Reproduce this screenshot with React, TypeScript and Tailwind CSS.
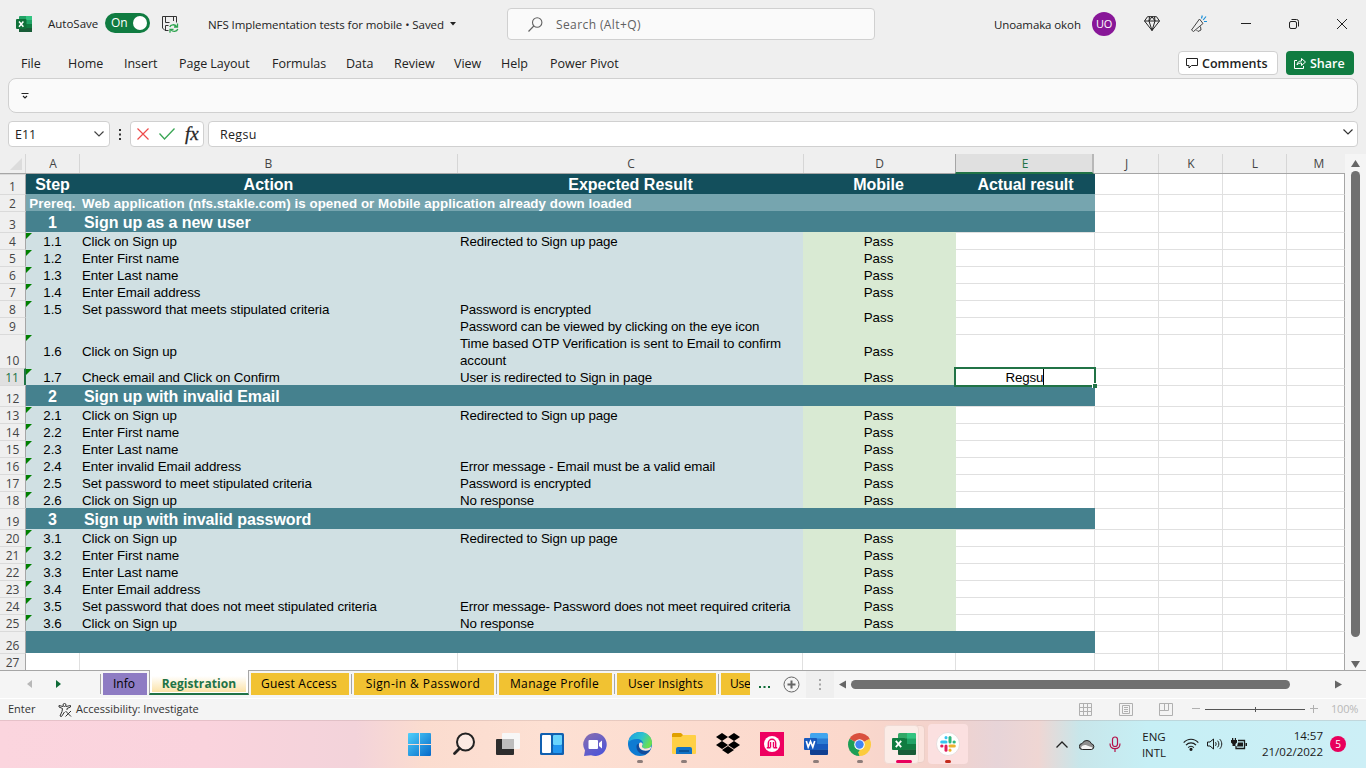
import React from "react";

type RowKind = "head" | "prereq" | "section" | "step" | "closing" | "blank";

interface SheetRow {
  n: number;
  kind: RowKind;
  h: string;
  step?: string;
  action?: string;
  expected?: string;
  mobile?: string;
  actual?: string;
}

const H17 = "h-[17px]";

const rows: SheetRow[] = [
  { n: 1, kind: "head", h: "h-[20px]", step: "Step", action: "Action", expected: "Expected Result", mobile: "Mobile", actual: "Actual result" },
  { n: 2, kind: "prereq", h: H17, step: "Prereq.", action: "Web application (nfs.stakle.com) is opened or Mobile application already down loaded" },
  { n: 3, kind: "section", h: "h-[21px]", step: "1", action: "Sign up as a new user" },
  { n: 4, kind: "step", h: H17, step: "1.1", action: "Click on Sign up", expected: "Redirected to Sign up page", mobile: "Pass" },
  { n: 5, kind: "step", h: H17, step: "1.2", action: "Enter First name", mobile: "Pass" },
  { n: 6, kind: "step", h: H17, step: "1.3", action: "Enter Last name", mobile: "Pass" },
  { n: 7, kind: "step", h: H17, step: "1.4", action: "Enter Email address", mobile: "Pass" },
  { n: 8, kind: "step", h: H17, step: "1.5", action: "Set password that meets stipulated criteria", expected: "Password is encrypted", mobile: "Pass" },
  { n: 9, kind: "step", h: H17, expected: "Password can be viewed by clicking on the eye icon" },
  { n: 10, kind: "step", h: "h-[34px]", step: "1.6", action: "Click on Sign up", expected: "Time based OTP Verification is sent to Email to confirm account", mobile: "Pass" },
  { n: 11, kind: "step", h: H17, step: "1.7", action: "Check email and Click on Confirm", expected: "User is redirected to Sign in page", mobile: "Pass" },
  { n: 12, kind: "section", h: "h-[21px]", step: "2", action: "Sign up with invalid Email" },
  { n: 13, kind: "step", h: H17, step: "2.1", action: "Click on Sign up", expected: "Redirected to Sign up page", mobile: "Pass" },
  { n: 14, kind: "step", h: H17, step: "2.2", action: "Enter First name", mobile: "Pass" },
  { n: 15, kind: "step", h: H17, step: "2.3", action: "Enter Last name", mobile: "Pass" },
  { n: 16, kind: "step", h: H17, step: "2.4", action: "Enter invalid Email address", expected: "Error message - Email must be a valid email", mobile: "Pass" },
  { n: 17, kind: "step", h: H17, step: "2.5", action: "Set password to meet stipulated criteria", expected: "Password is encrypted", mobile: "Pass" },
  { n: 18, kind: "step", h: H17, step: "2.6", action: "Click on Sign up", expected: "No response", mobile: "Pass" },
  { n: 19, kind: "section", h: "h-[21px]", step: "3", action: "Sign up with invalid password" },
  { n: 20, kind: "step", h: H17, step: "3.1", action: "Click on Sign up", expected: "Redirected to Sign up page", mobile: "Pass" },
  { n: 21, kind: "step", h: H17, step: "3.2", action: "Enter First name", mobile: "Pass" },
  { n: 22, kind: "step", h: H17, step: "3.3", action: "Enter Last name", mobile: "Pass" },
  { n: 23, kind: "step", h: H17, step: "3.4", action: "Enter Email address", mobile: "Pass" },
  { n: 24, kind: "step", h: H17, step: "3.5", action: "Set password that does not meet stipulated criteria", expected: "Error message- Password does not meet required criteria", mobile: "Pass" },
  { n: 25, kind: "step", h: H17, step: "3.6", action: "Click on Sign up", expected: "No response", mobile: "Pass" },
  { n: 26, kind: "closing", h: "h-[22px]" },
  { n: 27, kind: "blank", h: H17 },
];

const GRID = "grid grid-rows-[100%] grid-cols-[26px_54px_378px_345px_153px_139px_64px_64px_64px_58px]";

const bandColor: Record<RowKind, string> = {
  head: "bg-[#134f5c]",
  prereq: "bg-[#76a5af]",
  section: "bg-[#45818e]",
  closing: "bg-[#45818e]",
  step: "bg-[#d0e0e3]",
  blank: "bg-white border-r border-[#e0e0e0]",
};

const bandText: Record<RowKind, string> = {
  head: "text-white font-bold text-[16px] leading-[20px]",
  prereq: "text-white font-bold text-[13.33px] leading-[17px] tracking-[0.05px]",
  section: "text-white font-bold text-[16px] leading-[21px] tracking-[-0.07px]",
  closing: "",
  step: "text-black text-[13.33px] leading-[17px]",
  blank: "",
};

function TitleBar() {
  return (
    <header className="flex h-12 shrink-0 items-center text-[12px] text-[#222]">
      <svg className="ml-4 shrink-0" width="16" height="16" viewBox="0 0 16 16">
        <rect x="3" width="13" height="16" rx="1" fill="#21a366" />
        <rect x="10" width="6" height="4" fill="#33c481" />
        <rect x="3" y="4" width="7" height="4" fill="#107c41" />
        <rect x="3" y="8" width="13" height="4" fill="#107c41" />
        <rect x="3" y="12" width="13" height="4" fill="#185c37" />
        <rect y="3" width="10.500" height="10" rx="1" fill="#0f7039" />
        <path d="M3 5.500l4.400 5.200M7.400 5.500L3 10.700" stroke="#fff" strokeWidth="1.500" />
      </svg>
      <span className="ml-4 w-[57px] whitespace-nowrap text-[11.5px]">AutoSave</span>
      <div className="flex h-5 w-[45px] -translate-y-px items-center justify-between rounded-full bg-[#107c41] pl-1.5 pr-[3px] text-white">
        <span>On</span>
        <span className="size-[14px] rounded-full bg-white" />
      </div>
      <svg className="ml-3 shrink-0" width="17" height="17" viewBox="0 0 17 17" fill="none" stroke="#333">
        <path d="M6.500 14.500H3L.5 12V.5h14V6.500M3.500.5V6.500h4M11.500.5V5M3.500 14.500V9.500h3" />
        <path d="M7.800 11c.7-2.600 5-3.200 6.800-.4M15.500 7.500v3.500h-3.500M15.800 13c-.9 2.800-5 3.400-6.900.6M8 16.800v-3.500h3.500" stroke="#2ea44f" strokeWidth="1.300" />
      </svg>
      <span className="ml-[29px] w-[237px] translate-y-px whitespace-nowrap text-[11.5px] tracking-[-0.07px]">NFS Implementation tests for mobile • Saved</span>
      <svg className="ml-[5px]" width="6" height="4" viewBox="0 0 6 4"><path d="M0 0h6L3 3.500z" fill="#222" /></svg>
      <div className="ml-[51px] flex h-8 w-[368px] items-center rounded-[4px] border border-[#d0d0d0] bg-[#fafafa] text-[#616161]">
        <svg className="ml-5" width="15" height="15" viewBox="0 0 15 15" fill="none" stroke="#616161" strokeWidth="1.100">
          <circle cx="9.200" cy="5.500" r="4.700" />
          <path d="M5.800 9L.5 14.500" />
        </svg>
        <span className="ml-[13px] translate-y-px tracking-[0.4px]">Search (Alt+Q)</span>
      </div>
      <span className="ml-[119px] w-[87px] translate-y-px whitespace-nowrap text-[11.5px] tracking-[-0.1px]">Unoamaka okoh</span>
      <span className="ml-[11px] flex size-6 items-center justify-center rounded-full bg-[#881798] text-[11px] tracking-[-0.3px] text-white">UO</span>
      <svg className="ml-7" width="16" height="16" viewBox="0 0 16 16" fill="none" stroke="#222">
        <path d="M3.500.7h9l3 4.300L8 14.500.5 5zM.5 5h15M8 .7L5 5l3 9.500L11 5zM5.500.7L5 5M10.500.7L11 5" />
      </svg>
      <svg className="ml-[30px]" width="18" height="18" viewBox="0 0 18 18" fill="none" stroke="#444">
        <path d="M1.500 15L9.500 4l3.500 4.500L3.500 16.500zM6.500 15l1.500 1.500 3-1.500-.5-3.500" />
        <path d="M11.500 3.500L12.300.5M13.200 5L16 1.500M14 6.500h3" stroke="#1a8fd8" strokeWidth="1.200" />
      </svg>
      <svg className="ml-[33px]" width="10" height="10" viewBox="0 0 10 10"><path d="M0 4.500h10" stroke="#222" /></svg>
      <svg className="ml-[38px]" width="10" height="10" viewBox="0 0 10 10" fill="none" stroke="#222">
        <rect x=".5" y="2.500" width="7" height="7" rx="1.500" />
        <path d="M2.500.5H7.500a2 2 0 0 1 2 2V7.500" />
      </svg>
      <svg className="ml-[38px]" width="10" height="10" viewBox="0 0 10 10"><path d="M0 0l10 10M10 0L0 10" stroke="#222" /></svg>
    </header>
  );
}

function MenuBar() {
  return (
    <nav className="flex h-[30px] shrink-0 items-center text-[12.5px] text-[#222]">
      <div className="grid translate-y-px grid-cols-[47px_56px_55px_93px_74px_48px_60px_47px_49px_80px] whitespace-nowrap pl-[21px] tracking-[-0.03px]">
        <span>File</span>
        <span>Home</span>
        <span>Insert</span>
        <span>Page Layout</span>
        <span>Formulas</span>
        <span>Data</span>
        <span>Review</span>
        <span>View</span>
        <span>Help</span>
        <span>Power Pivot</span>
      </div>
      <button className="ml-auto flex h-6 w-[100px] items-center rounded-[4px] border border-[#d0d0d0] bg-white pl-[7px] text-[12.5px] font-semibold">
        <svg width="12" height="11" viewBox="0 0 12 11" fill="none" stroke="#222"><path d="M.5.500h11v7H5.500L3 10V7.500H.5z" /></svg>
        <span className="ml-[4px] translate-y-px">Comments</span>
      </button>
      <button className="ml-2 mr-3 flex h-6 w-[68px] items-center rounded-[4px] bg-[#107c41] pl-2 text-[12.5px] font-semibold text-white">
        <svg width="12" height="12" viewBox="0 0 12 12" fill="none" stroke="#fff"><path d="M3 3.500H.5v8h9V9M3 8c.3-3 2-4 4.500-4V1.500l4 3.500-4 3.500V6C5.500 6 4 6.500 3 8z" /></svg>
        <span className="ml-1 translate-y-px">Share</span>
      </button>
    </nav>
  );
}

function FormulaBar() {
  const box = "flex h-[26px] items-center border border-[#d0d0d0] bg-white rounded-[4px]";
  return (
    <div className="mt-[8px] flex h-[26px] shrink-0 items-center px-2 text-[12.5px] text-[#222]">
      <div className={`${box} w-[102px] justify-between pl-[6px] pr-[5px]`}>
        <span className="translate-y-px">E11</span>
        <svg width="10" height="6" viewBox="0 0 10 6" fill="none" stroke="#444" strokeWidth="1.200"><path d="M.5.500L5 5 9.500.5" /></svg>
      </div>
      <svg className="ml-[9px]" width="2" height="11" viewBox="0 0 2 11" fill="#333"><path d="M0 0h2v2H0zM0 4.500h2v2H0zM0 9h2v2H0z" /></svg>
      <div className={`${box} ml-[9px] w-[74px] pl-[6px]`}>
        <svg width="12" height="12" viewBox="0 0 12 12"><path d="M.5.500l11 11M11.500.5l-11 11" stroke="#ee4b4b" strokeWidth="1.200" /></svg>
        <svg className="ml-[10px]" width="16" height="12" viewBox="0 0 16 12" fill="none"><path d="M.5 5.500l5 5.500L15.500.5" stroke="#3aa655" strokeWidth="1.300" /></svg>
        <span className="ml-[10px] -translate-y-px font-['Liberation_Serif',serif] text-[19px] italic leading-none text-[#222] [-webkit-text-stroke:0.3px_#333]">fx</span>
      </div>
      <div className={`${box} ml-1 flex-1 justify-between pl-[11px] pr-[4px]`}>
        <span className="translate-y-px tracking-[0.3px]">Regsu</span>
        <svg className="mb-1" width="10" height="6" viewBox="0 0 10 6" fill="none" stroke="#333" strokeWidth="1.200"><path d="M.5.500L5 5 9.500.5" /></svg>
      </div>
    </div>
  );
}

function ColumnHeaders() {
  const cell = "flex items-center justify-center border-r border-[#d6d6d6]";
  return (
    <div className={`${GRID} h-[20px] border-b border-[#a6a6a6] text-[12px] leading-[18px] text-[#444]`}>
      <div className="flex items-end justify-end border-r border-[#d6d6d6] pb-[3px] pr-[3px]">
        <svg width="12" height="12" viewBox="0 0 12 12"><path d="M12 0v12H0z" fill="#dcdcdc" /></svg>
      </div>
      <div className={`${cell} pl-px`}>A</div>
      <div className={cell}>B</div>
      <div className={`${cell} -mr-px pl-px`}>C</div>
      <div className="flex items-center justify-center">D</div>
      <div className="-mb-px -ml-px mr-px flex h-[20px] items-center justify-center border-b-2 border-l border-r-2 border-b-[#217346] border-l-[#a6a6a6] border-r-[#b8b8b8] bg-[#e0e0e0] pl-[2px] pt-px text-[#217346]">E</div>
      <div className={cell}>J</div>
      <div className={`${cell} pl-px`}>K</div>
      <div className={`${cell} pl-px`}>L</div>
      <div className="flex items-center justify-center pl-[6px]">M</div>
    </div>
  );
}

function RowView({ row }: { row: SheetRow }) {
  const { kind, n } = row;
  const band = bandColor[kind];
  const txt = bandText[kind];
  const head = kind === "head";
  const step = kind === "step";
  const selected = n === 11;
  const plain = "border-r border-[#e0e0e0] bg-white";
  const line = n === 1 ? "" : "border-t";
  const drop = n === 10 ? "" : "translate-y-px";
  const expectedTracking = !step ? "" : n === 10 ? "tracking-[-0.075px]" : "tracking-[-0.15px]";
  return (
    <div className={`${GRID} ${row.h} whitespace-nowrap font-['Liberation_Sans',Arial,sans-serif]`}>
      <div
        className={`flex items-end justify-center border-t border-t-[#dadada] font-['Open_Sans',sans-serif] text-[12px] leading-[14px] ${
          selected ? "border-r-2 border-r-[#217346] bg-[#e0e0e0] text-[#217346]" : "border-r border-r-[#a6a6a6] text-[#444]"
        }`}
      >
        {n}
      </div>
      <div className={`relative flex items-center justify-center pr-px ${band} ${txt}`}>
        {step && row.step ? (
          <svg className="absolute left-0 top-px" width="6" height="6" viewBox="0 0 6 6"><path d="M0 0h6L0 6z" fill="#008000" /></svg>
        ) : null}
        <span className={drop}>{row.step}</span>
      </div>
      <div className={`flex items-center ${head ? "justify-center pr-px" : kind === "section" ? "pl-1" : "pl-0.5"} ${band} ${txt}`}>
        <span className={`relative z-10 ${drop} ${step ? "tracking-[-0.09px]" : ""}`}>{row.action}</span>
      </div>
      <div className={`flex items-center ${head ? "justify-center" : "pl-0.5 pr-2"} ${n === 10 ? "whitespace-normal" : ""} ${band} ${txt}`}>
        <span className={`translate-y-px ${expectedTracking}`}>{row.expected}</span>
      </div>
      <div className={`flex items-center justify-center pr-[2px] ${step ? "bg-[#d9ead3]" : band} ${txt}`}>
        {n === 8 ? <span className="relative top-[9px] z-10">{row.mobile}</span> : <span className={drop}>{row.mobile}</span>}
      </div>
      {selected ? (
        <div className="relative">
          <div className="absolute -left-[2px] -top-px z-10 flex h-[20px] w-[142px] items-center justify-center border-2 border-[#217346] bg-white text-[13.33px] tracking-[-0.15px] text-black">
            <span className="border-r border-black pt-px leading-[15px]">Regsu</span>
            <span className="absolute -bottom-[3px] -right-[3px] size-[5px] border-l border-t border-white bg-[#217346]" />
          </div>
        </div>
      ) : (
        <div className={`flex items-center justify-center ${step ? `${plain} ${line}` : band} ${txt}`}>
          <span className="translate-y-px tracking-[-0.08px]">{row.actual}</span>
        </div>
      )}
      <div className={`${plain} ${line}`} />
      <div className={`${plain} ${line}`} />
      <div className={`${plain} ${line}`} />
      <div className={`border-r border-r-[#a6a6a6] border-t-[#e0e0e0] bg-white ${line}`} />
    </div>
  );
}

function SheetTabs() {
  const base = "flex h-[22px] shrink-0 items-center overflow-hidden whitespace-nowrap text-[12px] text-black";
  const tab = `${base} justify-center bg-[#f1c232] pr-[2px]`;
  const sep = "mx-0.5 h-5 w-px shrink-0 bg-[#a6a6a6]";
  return (
    <div className="flex h-[28px] shrink-0 items-start border-t border-[#a6a6a6] bg-[#f5f5f5]">
      <div className="flex h-[26px] w-[100px] shrink-0 items-center">
        <svg className="ml-[27px]" width="5" height="8" viewBox="0 0 5 8"><path d="M5 0v8L0 4z" fill="#b8b8b8" /></svg>
        <svg className="ml-[24px]" width="5" height="8" viewBox="0 0 5 8"><path d="M0 0v8l5-4z" fill="#0e6b37" /></svg>
      </div>
      <div className="flex items-center pt-0.5">
        <span className="mr-0.5 h-5 w-px bg-[#a6a6a6]" />
        <div className={`${base} w-11 justify-center bg-[#8e7cc3] pr-[2px]`}>Info</div>
      </div>
      <div className="ml-[2px] flex h-[25px] w-[100px] -translate-y-px flex-col border-b-2 border-l border-r border-b-[#217346] border-l-[#a6a6a6] border-r-[#a6a6a6] bg-white p-[2px] pb-px">
        <div className="flex h-[20px] items-center justify-center bg-gradient-to-b from-white from-20% to-[#fbe2a6] pt-[4px] text-[12px] font-bold leading-[16px] text-[#217346]">
          <span className="tracking-[0.08px]">Registration</span>
        </div>
      </div>
      <div className="ml-0.5 flex items-center pt-0.5">
        <div className={`${tab} w-[98px]`}><span className="tracking-[0.22px]">Guest Access</span></div>
        <span className={sep} />
        <div className={`${tab} w-[140px]`}><span className="tracking-[0.44px]">Sign-in &amp; Password</span></div>
        <span className={sep} />
        <div className={`${tab} w-[113px]`}><span className="tracking-[0.36px]">Manage Profile</span></div>
        <span className={sep} />
        <div className={`${tab} w-[99px]`}><span className="tracking-[0.2px]">User Insights</span></div>
        <span className={sep} />
        <div className={`${base} w-[29px] justify-start bg-[#f1c232] pl-[9px]`}><span className="tracking-[-0.2px]">Use</span></div>
      </div>
      <svg className="ml-[9px] mt-[15px]" width="11" height="2" viewBox="0 0 11 2" fill="#0e6b37"><path d="M0 0h2v2H0zM4.500 0h2v2h-2zM9 0h2v2H9z" /></svg>
      <svg className="ml-[13px] mt-[4.500px]" width="17" height="17" viewBox="0 0 17 17" fill="none" stroke="#666"><circle cx="8.500" cy="8.500" r="7.500" /><path d="M8.500 4.500v8M4.500 8.500h8" strokeWidth="2" /></svg>
      <div className="ml-[6px] flex h-[27px] w-7 items-center justify-center bg-[#efefef]">
        <svg width="2" height="11" viewBox="0 0 2 11" fill="#a6a6a6"><path d="M0 0h2v2H0zM0 4.500h2v2H0zM0 9h2v2H0z" /></svg>
      </div>
      <div className="flex h-[27px] items-center">
        <svg className="ml-[5px]" width="7" height="9" viewBox="0 0 7 9"><path d="M7 .5v8L0 4.500z" fill="#666" /></svg>
        <span className="ml-[5px] h-[9px] w-[439px] rounded-full bg-[#707070]" />
        <svg className="ml-[45px]" width="7" height="9" viewBox="0 0 7 9"><path d="M0 .5v8l7-4z" fill="#666" /></svg>
      </div>
    </div>
  );
}

function StatusBar() {
  return (
    <footer className="flex h-[22px] shrink-0 items-center border-t border-white bg-[#f4f4f4] text-[11px] text-[#333]">
      <span className="ml-2 w-[50px]">Enter</span>
      <svg width="14" height="14" viewBox="0 0 14 14" fill="none" stroke="#333">
        <circle cx="6.500" cy="2" r="1.500" />
        <path d="M5 3.500L1 2.500v1.500l3.500 1.500L4 8.500l-2 4.500 1.500.5L6.500 9M8 3.500l4.500-1v1.500L9 5.500V7M7.500 8l5.500 5.500M13 8l-5.500 5.500" />
      </svg>
      <span className="ml-1">Accessibility: Investigate</span>
      <svg className="ml-auto" width="13" height="13" viewBox="0 0 13 13" fill="none" stroke="#b0b0b0"><path d="M.5.500h12v12H.5zM4.500.5v12M8.500.5v12M.5 4.500h12M.5 8.500h12" /></svg>
      <svg className="ml-[27px]" width="14" height="13" viewBox="0 0 14 13" fill="none" stroke="#b0b0b0"><path d="M.5.500h13v12H.5zM3.500 2.500h7v8h-7zM5 4.500h4M5 6.500h4M5 8.500h4" /></svg>
      <svg className="ml-[26px]" width="14" height="13" viewBox="0 0 14 13" fill="none" stroke="#b0b0b0"><path d="M.5.500h13v12H.5zM5.500.5v7M9.500.5v7M.5 7.500h9" /></svg>
      <svg className="ml-[19px]" width="126" height="9" viewBox="0 0 126 9"><path d="M0 3.500h8M121.500 0v8M118 3.500h8" stroke="#b0b0b0" /><path d="M13 4.500h100" stroke="#555" /><path d="M63.500 2v5" stroke="#555" /></svg>
      <span className="ml-[13px] mr-2 w-[27px] whitespace-nowrap tracking-[-0.2px] text-[#b8b8b8]">100%</span>
    </footer>
  );
}

function Slot({ children, dot }: { children: React.ReactNode; dot?: string }) {
  return (
    <div className="relative flex h-12 w-11 shrink-0 items-center justify-center">
      {children}
      {dot ? <span className={`absolute bottom-[5px] h-[3px] rounded-full ${dot}`} /> : null}
    </div>
  );
}

function OfficeTile({ word }: { word?: boolean }) {
  const c = word ? ["#41a5ee", "#2b7cd3", "#185abd", "#103f91", "#185abd"] : ["#33a867", "#21a366", "#107c41", "#185c37", "#107c41"];
  return (
    <svg width="24" height="22" viewBox="0 0 24 22">
      <rect x="6" width="18" height="22" rx="1.500" fill={c[0]} />
      <rect x="6" y="5.500" width="18" height="5.500" fill={c[1]} />
      <rect x="6" y="11" width="18" height="5.500" fill={c[2]} />
      <path d="M6 16.500h18v4a1.500 1.500 0 0 1-1.500 1.500h-15A1.500 1.500 0 0 1 6 20.500z" fill={c[3]} />
      {word ? null : <path d="M15 0h7.500A1.500 1.500 0 0 1 24 1.500v4h-9z" fill="#33c481" />}
      {word ? null : <path d="M6 5.500h9V11H6z" fill="#107c41" />}
      <rect y="5" width="13" height="12" rx="1" fill={c[4]} />
      {word ? (
        <path d="M2.300 8l1.900 6L6.500 8.500 8.800 14l1.900-6" fill="none" stroke="#fff" strokeWidth="1.700" />
      ) : (
        <path d="M3.800 7.800l5.400 6.400M9.200 7.800l-5.400 6.400" stroke="#fff" strokeWidth="1.800" />
      )}
    </svg>
  );
}

function Taskbar() {
  return (
    <div className="flex h-12 shrink-0 items-center bg-[linear-gradient(90deg,#fbd5de_0%,#fad3dd_15%,#f3d3da_26%,#fbdccf_31%,#fde0d3_40%,#fbd8cc_62%,#f3d2cc_69%,#e7d4d8_73%,#efd6d3_76%,#c8e6ea_79%,#c6eff5_84%,#cdeff6_100%)] shadow-[inset_0_1px_0_rgba(150,120,120,0.2)]">
      <div className="ml-[397.500px] flex">
        <Slot>
          <svg width="23" height="23" viewBox="0 0 23 23">
            <defs><linearGradient id="win" x1="0" y1="0" x2="1" y2="1"><stop stopColor="#4fd0fb" /><stop offset="1" stopColor="#0669c9" /></linearGradient></defs>
            <path d="M1 0h10v11H0V1a1 1 0 0 1 1-1zM12 0h10a1 1 0 0 1 1 1v10H12zM0 12h11v11H1a1 1 0 0 1-1-1zM12 12h11v10a1 1 0 0 1-1 1H12z" fill="url(#win)" />
          </svg>
        </Slot>
        <Slot>
          <svg width="24" height="24" viewBox="0 0 24 24" fill="none" stroke="#222"><circle cx="13.500" cy="10" r="8.500" fill="#ffffff66" strokeWidth="2" /><path d="M7.500 16.500L2.500 21.500" strokeWidth="2.800" strokeLinecap="round" /></svg>
        </Slot>
        <Slot>
          <svg width="24" height="22" viewBox="0 0 24 22"><rect x="0" y="6" width="18" height="16" rx="1" fill="#2d2d2d" /><rect x="6" y="0" width="18" height="16" rx="1" fill="#f7f7f7" /><path d="M6 6h12v10H6z" fill="#bdbdbd" /></svg>
        </Slot>
        <Slot>
          <svg width="24" height="22" viewBox="0 0 24 22"><rect width="24" height="22" rx="1.500" fill="#1160b0" /><rect x="2" y="2" width="9" height="18" rx="1" fill="#fff" /><rect x="13" y="2" width="9" height="10" rx="1" fill="#69d4fd" /><rect x="13" y="12" width="9" height="8" rx="1" fill="#2196f0" /></svg>
        </Slot>
        <Slot>
          <svg className="-translate-x-px" width="24" height="23" viewBox="0 0 24 23">
            <defs><linearGradient id="chat" x1="0" y1="0" x2="0.600" y2="1"><stop stopColor="#8a6fae" /><stop offset="1" stopColor="#5056d6" /></linearGradient></defs>
            <path d="M12 0a11.500 11.500 0 1 1-4 22.200L1 23l1-5.500A11.500 11.500 0 0 1 12 0z" fill="url(#chat)" />
            <rect x="5.500" y="7" width="9.500" height="9" rx="1" fill="#fff" /><path d="M16 10l3-2.500v8L16 13z" fill="#fff" />
          </svg>
        </Slot>
        <Slot dot="w-[6px] bg-[#8d7d7a]">
          <svg width="24" height="24" viewBox="0 0 24 24">
            <defs>
              <linearGradient id="edgeTop" x1="0" y1="0" x2="1" y2="0.400"><stop stopColor="#1b9de2" /><stop offset=".6" stopColor="#2dc3cf" /><stop offset="1" stopColor="#6ade52" /></linearGradient>
            </defs>
            <circle cx="12" cy="12" r="12" fill="#0f7bd2" />
            <path d="M0 11C1 4.500 6 0 12 0c7 0 12 5 12 10.500 0 4-3 6-6 6-2.500 0-4-1-4-2 0-.8 1-1.200 1-3C15 9 12.500 7 9 7c-4 0-7.500 1.500-9 4z" fill="url(#edgeTop)" />
            <path d="M8.500 14c-.5 5 4 8.500 9 8.500 2-1.200 3.700-2.700 4.800-4.700C18 20 9.500 19 11 11.500 9.500 12 8.600 12.800 8.500 14z" fill="#124b9b" />
            <path d="M11 12c.5-1.300 1.800-1.800 3-1 1 .8.800 1.700.2 2.500-.8 1.200.3 3 3.800 3 2.200 0 3.900-.9 4.900-2 .5 1-.4 2.500-1.200 3.200C17 20 10 18 11 12z" fill="#fde3d8" />
          </svg>
        </Slot>
        <Slot dot="w-[6px] bg-[#8d7d7a]">
          <svg width="24" height="22" viewBox="0 0 24 22"><path d="M1 0h8l2 2v3H0V1z" fill="#e0a000" /><path d="M0 4h9l2-2h12a1 1 0 0 1 1 1v17a1 1 0 0 1-1 1H1a1 1 0 0 1-1-1z" fill="#ffd045" /><path d="M6 14h12a2 2 0 0 1 2 2v5H4v-5a2 2 0 0 1 2-2z" fill="#1272c4" /><path d="M7 17h10v2H7z" fill="#0b5499" /></svg>
        </Slot>
        <Slot>
          <svg className="-translate-y-px" width="24" height="21" viewBox="0 0 24 21" fill="#000"><path d="M6 0l6 4-6 4-6-4zM18 0l6 4-6 4-6-4zM6 8l6 4-6 4-6-4zM18 8l6 4-6 4-6-4zM12 13l6 4-6 4-6-4z" /></svg>
        </Slot>
        <Slot>
          <svg width="24" height="24" viewBox="0 0 24 24"><rect width="24" height="24" fill="#ee0060" /><circle cx="12" cy="12" r="8" fill="#fff" /><path d="M8.300 15.500V11a3.700 3.700 0 0 1 7.400 0v4.500M6.800 15.800h3.700M13.500 15.800h3.700M10.500 15.500V10M13.500 15.500V10" fill="none" stroke="#ee0060" strokeWidth="1.400" /></svg>
        </Slot>
        <Slot dot="w-[6px] bg-[#8d7d7a]"><OfficeTile word /></Slot>
        <Slot dot="w-[6px] bg-[#8d7d7a]">
          <svg width="23" height="23" viewBox="0 0 24 24">
            <path d="M12 12L1.610 6A12 12 0 0 1 22.390 6z" fill="#d9503f" />
            <path d="M12 12L22.390 6A12 12 0 0 1 12 24z" fill="#fccb3d" />
            <path d="M12 12L12 24A12 12 0 0 1 1.610 6z" fill="#1e9e56" />
            <path d="M12 6.500h10.700L21 4 12 3z" fill="#d9503f" />
            <path d="M16.800 14.700L12 24l-1.500-4z" fill="#fccb3d" />
            <circle cx="12" cy="12" r="5.500" fill="#fff" /><circle cx="12" cy="12" r="4.400" fill="#4285f4" />
          </svg>
        </Slot>
        <div className="relative flex h-12 w-11 shrink-0 items-center justify-center">
          <span className="absolute right-px top-[5px] h-[38px] w-8 rounded-[4px] border border-[#eccfc8] bg-[#fbe4de]" />
          <span className="relative mr-1 flex h-[39px] w-[35px] items-center justify-center rounded-[4px] border border-[#f0dad4] bg-[#fbece7] pl-1"><OfficeTile /></span>
          <span className="absolute bottom-[5px] h-[3px] w-4 rounded-full bg-[#e8005c]" />
        </div>
        <div className="relative flex h-12 w-11 shrink-0 items-center justify-center">
          <span className="flex h-10 w-10 items-center justify-center rounded-[4px] bg-[#fbe0e0]">
            <svg width="24" height="24" viewBox="0 0 24 24">
              <circle cx="12" cy="12" r="11.500" fill="#fff" stroke="#d8d0d0" strokeWidth=".6" />
              <g strokeWidth="3" strokeLinecap="round">
                <path d="M10 5.500v.3" stroke="#36c5f0" /><path d="M5.700 10H10" stroke="#36c5f0" />
                <path d="M14 5.500V10" stroke="#2eb67d" /><path d="M18.300 10h-.3" stroke="#2eb67d" />
                <path d="M14 14h4.300" stroke="#ecb22e" /><path d="M14 18v.3" stroke="#ecb22e" />
                <path d="M10 14v4.300" stroke="#e01e5a" /><path d="M5.700 14h.3" stroke="#e01e5a" />
              </g>
            </svg>
          </span>
          <span className="absolute bottom-[5px] h-[3px] w-[6px] rounded-full bg-[#c42b1c]" />
        </div>
      </div>
      <div className="ml-auto flex h-12 items-center text-[11.500px] leading-[16px] text-[#1a1a1a]">
        <svg width="12" height="7" viewBox="0 0 12 7" fill="none" stroke="#222" strokeWidth="1.300"><path d="M.5 6.500L6 1l5.500 5.500" /></svg>
        <svg className="ml-[11px]" width="16" height="11" viewBox="0 0 16 11"><path d="M3.500 10.500a3 3 0 0 1-.3-6 5 5 0 0 1 9.300.3 2.900 2.900 0 0 1 0 5.700z" fill="#8f8f8f" stroke="#222" /><path d="M2 8.500C3.500 6 6 5.500 8 6.500l5.500 2c-.3 1-.8 1.500-1.500 1.500H4c-1 0-1.800-.6-2-1.500z" fill="#f4f4f4" /></svg>
        <svg className="ml-[14px]" width="12" height="17" viewBox="0 0 12 17" fill="none" stroke="#b5124a" strokeWidth="1.200"><rect x="3.500" y="1" width="5" height="9.500" rx="2.500" /><path d="M1 7.500c0 3.500 2 5.200 5 5.200s5-1.700 5-5.200M6 12.700V16" /></svg>
        <div className="ml-[20px] flex w-[26px] translate-y-px flex-col items-center whitespace-nowrap"><span>ENG</span><span>INTL</span></div>
        <svg className="ml-4" width="16" height="13" viewBox="0 0 16 13" fill="none" stroke="#1a1a1a" strokeWidth="1.200"><path d="M.7 4.600c4-4.500 10.600-4.500 14.600 0M3 7.200c2.800-3 7.200-3 10 0M5.200 9.600c1.600-1.800 4-1.800 5.600 0" /><circle cx="8" cy="11.300" r="1" fill="#1a1a1a" /></svg>
        <svg className="ml-2" width="16" height="12" viewBox="0 0 16 12" fill="none" stroke="#1a1a1a"><path d="M.5 4h2.500L6.500 1v10L3 8H.5zM8.500 4.200c.8 1 .8 2.600 0 3.600M10.600 2.700c1.700 2 1.700 4.600 0 6.600M12.800 1.200c2.600 2.800 2.600 6.800 0 9.600" /></svg>
        <svg className="ml-[8px]" width="16" height="12" viewBox="0 0 16 12"><path d="M7 2.500H13.500v8H5V8" fill="none" stroke="#1a1a1a" strokeWidth="1.300" /><path d="M7 4.500h5v4H6zM14.500 5H16v3h-1.500zM0 2h6v2.500L4.500 6v2h-3V6L0 4.500zM1 0h1.300v2H1zM3.800 0H5v2H3.800z" fill="#1a1a1a" /></svg>
        <div className="ml-4 flex w-[60px] flex-col items-end whitespace-nowrap"><span>14:57</span><span>21/02/2022</span></div>
        <span className="ml-[7px] mr-5 flex size-4 items-center justify-center rounded-full bg-[#e8005c] text-[10px] text-white">5</span>
      </div>
    </div>
  );
}

export default function App() {
  return (
    <div className="flex h-[768px] w-[1366px] flex-col overflow-hidden bg-[#efefef] font-['Open_Sans',sans-serif]">
      <TitleBar />
      <MenuBar />
      <div className="mx-2 flex h-[35px] shrink-0 items-center rounded-[8px] border border-[#d0d0d0] bg-[#fafafa] pl-3">
        <svg width="8" height="6" viewBox="0 0 8 6" fill="none" stroke="#222"><path d="M.5.500h7M2 3l2 2 2-2" strokeWidth="1.100" /></svg>
      </div>
      <FormulaBar />
      <main className="mt-[7px] flex h-[516px] shrink-0 overflow-hidden">
        <div className="w-[1345px] shrink-0">
          <ColumnHeaders />
          {rows.map((r) => (
            <RowView key={r.n} row={r} />
          ))}
        </div>
        <div className="flex w-[21px] flex-col items-center bg-[#f5f5f5]">
          <svg className="mt-[6px] shrink-0" width="9" height="7" viewBox="0 0 9 7"><path d="M4.500 0L9 7H0z" fill="#666" /></svg>
          <span className="mt-1 h-[466px] w-[9px] shrink-0 rounded-full bg-[#707070]" />
          <svg className="mt-[24px] shrink-0" width="9" height="7" viewBox="0 0 9 7"><path d="M0 0h9L4.500 7z" fill="#666" /></svg>
        </div>
      </main>
      <SheetTabs />
      <StatusBar />
      <Taskbar />
    </div>
  );
}
